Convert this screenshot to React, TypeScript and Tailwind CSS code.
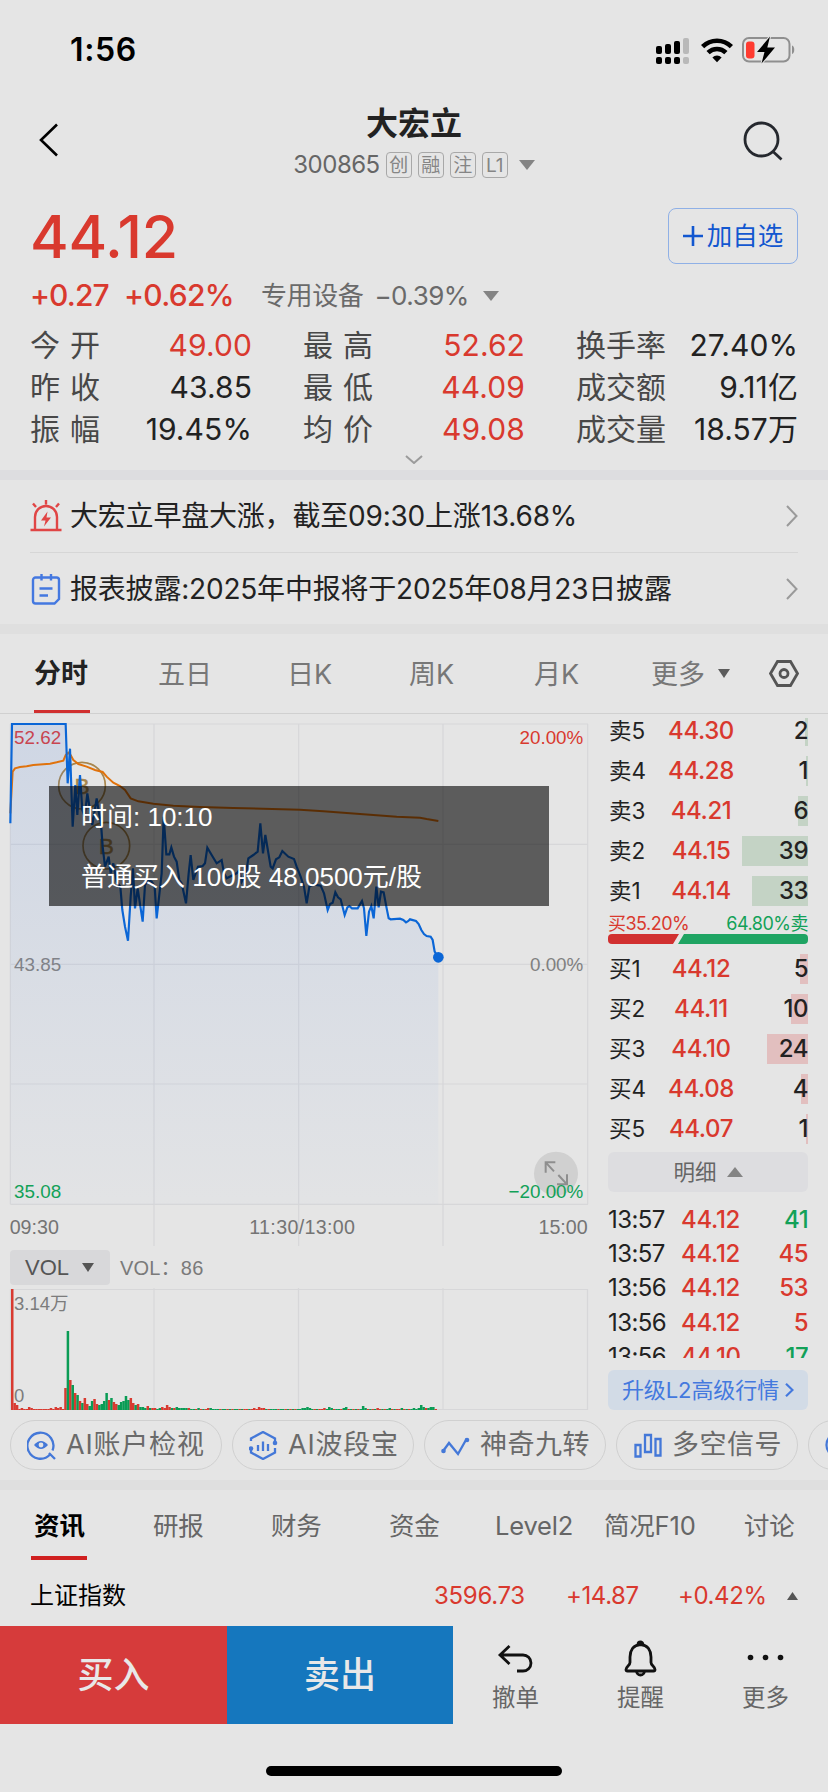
import React from 'react';
import clsx from 'clsx';

type Cell = { label: string; value: string; up?: boolean };

const stats: Cell[][] = [
  [
    { label: '今开', value: '49.00', up: true },
    { label: '昨收', value: '43.85' },
    { label: '振幅', value: '19.45%' },
  ],
  [
    { label: '最高', value: '52.62', up: true },
    { label: '最低', value: '44.09', up: true },
    { label: '均价', value: '49.08', up: true },
  ],
  [
    { label: '换手率', value: '27.40%' },
    { label: '成交额', value: '9.11亿' },
    { label: '成交量', value: '18.57万' },
  ],
];

const asks = [
  { label: '卖5', price: '44.30', qty: 2, width: 3 },
  { label: '卖4', price: '44.28', qty: 1, width: 2 },
  { label: '卖3', price: '44.21', qty: 6, width: 10 },
  { label: '卖2', price: '44.15', qty: 39, width: 66 },
  { label: '卖1', price: '44.14', qty: 33, width: 56 },
];

const bids = [
  { label: '买1', price: '44.12', qty: 5, width: 8 },
  { label: '买2', price: '44.11', qty: 10, width: 17 },
  { label: '买3', price: '44.10', qty: 24, width: 41 },
  { label: '买4', price: '44.08', qty: 4, width: 7 },
  { label: '买5', price: '44.07', qty: 1, width: 2 },
];

const ticks = [
  { time: '13:57', price: '44.12', qty: 41, sell: true },
  { time: '13:57', price: '44.12', qty: 45 },
  { time: '13:56', price: '44.12', qty: 53 },
  { time: '13:56', price: '44.12', qty: 5 },
  { time: '13:56', price: '44.10', qty: 17, sell: true },
];

const priceLine =
  '31,370 36,72 197,72 203,250 210,146 218,380 226,255 232,345 240,225 247,330 254,350 262,280 270,330 277,375 290,295 297,340 303,370 308,440 315,500 326,470 332,520 340,490 350,545 361,560 367,630 375,680 384,722 392,590 399,505 405,625 413,565 428,665 435,555 445,540 455,545 464,560 470,655 485,520 491,350 499,463 508,463 514,442 522,470 530,485 538,540 545,550 558,610 566,520 572,465 580,540 594,500 608,498 615,490 622,443 635,465 650,490 665,480 672,520 680,535 710,520 718,510 725,545 738,520 745,475 760,465 773,455 781,370 789,460 796,405 812,500 818,505 828,478 838,472 847,453 865,470 882,477 890,500 902,530 912,560 920,610 928,560 940,553 962,557 972,580 983,630 990,612 998,608 1006,577 1014,592 1022,598 1034,645 1042,622 1048,618 1056,625 1073,625 1086,603 1092,625 1099,708 1107,635 1114,618 1121,655 1129,560 1136,622 1143,575 1151,577 1160,625 1166,655 1172,658 1200,656 1210,660 1218,667 1225,663 1230,658 1248,663 1256,672 1264,690 1272,702 1280,708 1292,710 1298,720 1304,755 1315,772';

const avgLine =
  '31,340 38,215 45,205 60,201 80,199 100,195 150,191 170,187 190,182 197,165 205,158 212,165 220,180 235,192 260,200 285,210 308,216 320,230 340,248 360,258 375,270 392,295 415,304 460,311 520,317 600,321 700,324 900,329 970,334 1040,339 1120,345 1190,350 1260,353 1280,357 1315,363';

// one entry per minute: height in px, g = falling minute
const volumes = (
  '121 7 5 1 2 1 1 3 2 1 1 1 1 1 1 1 2 1 3 2 3 1 22 79g 30 25g 17 15g 9 7g 12 6 4g 9g 11 6 5g 6g 9g 17g 10 12g 8 6 5g 8g 9g 14g 10g 12 7 5g 6 3g 3g 2g 4 2g 2 2 1g 2g 3 2 5 3 2g 2 3g 2g 2g 2g 2g 2 1g 1g 1 2g 1 1g 1 2 2g 1g 1g 1g 1 1g 1g 1 1g 1 1g 1g 1 1g 1 1 1g 1 2 1 3 2 2 1g 1 1g 1g 1g 1 1g 1g 1 1g 1 1g 1 1g 1g 2g 2g 3g 2g 1g 1 1g 1 1 2 1g 3g 2g 1 1g 1g 1 2g 3g 1 1g 1 1g 1 1g 4g 2g 1 1g 1 1g 2 1 1g 1 1g 2g 1 1g 1 1 2g 1 1g 1 1g 2g 1g 2g 5g 3g 2 2g 3g 3g 1'
).split(' ');

const axisFont = { fontFamily: "'Liberation Sans','Noto Sans CJK SC',sans-serif" };

const Down = ({ className = '' }: { className?: string }) => (
  <svg viewBox="0 0 16 10" preserveAspectRatio="none" className={className} fill="currentColor">
    <path d="M0 0h16L8 10z" />
  </svg>
);

const ChevronRight = () => (
  <svg viewBox="0 0 12 22" className="h-[22px] w-3" fill="none" stroke="#9a9a9a" strokeWidth="2">
    <path d="M1 1l9.5 10L1 21" />
  </svg>
);

const StatusBar = () => (
  <div className="flex h-[100px] items-center justify-between pr-[32px] pl-[70px]">
    <span className="text-[32px] font-semibold tracking-[0.6px] text-black">1:56</span>
    <div className="flex items-center">
      <svg viewBox="0 0 34 28" className="h-7 w-[34px]">
        {[
          [0, 10],
          [9, 8],
          [18, 5],
          [27, 2],
        ].map(([x, y], i) => (
          <g key={x} fill={i === 3 ? '#b9b9b9' : '#000'}>
            <rect x={x} y={y} width="6" height={18 - y} rx="2" />
            <rect x={x} y="21" width="6" height="7" rx="2" />
          </g>
        ))}
      </svg>
      <svg viewBox="0 0 32 25" className="ml-[11px] h-[25px] w-8" fill="none" stroke="#000" strokeWidth="4.600">
        <path d="M1.6 8.6a20.5 20.5 0 0 1 28.8 0" />
        <path d="M7.1 14.6a12.8 12.8 0 0 1 17.8 0" />
        <path d="M11.4 19.4a6.6 6.6 0 0 1 9.2 0L16 24.3z" fill="#000" stroke="none" />
      </svg>
      <svg viewBox="0 0 54 28" className="ml-[9px] h-7 w-[54px]">
        <rect x="1" y="2" width="46.5" height="23.5" rx="6" fill="none" stroke="#8f8f8f" strokeWidth="2" />
        <path d="M50 9.500c3 1 3 7.500 0 8.500z" fill="#8f8f8f" />
        <rect x="4" y="5.500" width="8.500" height="17" rx="3" fill="#ff3b30" />
        <path d="M28 .5L15 16h7.500L19.500 27.500 33 11.500h-7.700z" fill="#000" stroke="#e5e5e5" strokeWidth="2" paintOrder="stroke" />
      </svg>
    </div>
  </div>
);

const Header = () => (
  <div className="flex h-[96px] justify-between pr-[45px] pl-[39px]">
    <svg viewBox="0 0 20 34" className="mt-[23px] h-[34px] w-5" fill="none" stroke="#000" strokeWidth="2.600">
      <path d="M18 1.500L2 17l16 15.500" />
    </svg>
    <div className="flex flex-col items-center pl-[26px]">
      <h1 className="mt-[4px] h-10 text-[32px] leading-10 font-bold text-[#222]">大宏立</h1>
      <div className="mt-[8px] flex h-[26px] items-center gap-[6px] text-[#666]">
        <span className="text-[24px] tracking-[-0.5px]">300865</span>
        {['创', '融', '注', 'L1'].map((tag) => (
          <span
            key={tag}
            className="flex size-[26px] items-center justify-center rounded-[4px] border border-[#a8a8a8] text-[19px] leading-none text-[#858585]"
          >
            {tag}
          </span>
        ))}
        <Down className="ml-[5px] h-[10px] w-4 text-[#848484]" />
      </div>
    </div>
    <svg viewBox="0 0 40 40" className="mt-[21px] size-10" fill="none" stroke="#25282e" strokeWidth="2.800">
      <circle cx="18.500" cy="18.500" r="16.500" />
      <path d="M30.500 31l8 7.500" />
    </svg>
  </div>
);

const Quote = () => (
  <section className="h-[274px] px-[30px]">
    <div className="flex h-[80px] items-center justify-between">
      <span className="text-[59px] leading-none font-medium tracking-[-0.2px] text-[#d9392e]">44.12</span>
      <button className="flex h-14 w-[130px] items-center justify-center gap-1 rounded-lg border border-[#8fb0e6] text-[25.500px] text-[#1257d0]">
        <svg viewBox="0 0 20 20" className="size-[20px]" stroke="currentColor" strokeWidth="2.600">
          <path d="M10 0v20M0 10h20" />
        </svg>
        加自选
      </button>
    </div>
    <div className="flex h-[39px] items-center text-[#d9392e]">
      <span className="w-[94px] text-[30px] font-medium tracking-[-0.9px]">+0.27</span>
      <span className="w-[137px] text-[30px] font-medium tracking-[-0.7px]">+0.62%</span>
      <span className="text-[26px] tracking-[-0.4px] text-[#6a6a6a]">专用设备</span>
      <span className="ml-[11px] text-[26px] tracking-[-0.5px] text-[#6a6a6a]">−0.39%</span>
      <Down className="ml-[14px] h-[10px] w-4 text-[#848484]" />
    </div>
    <div className="mt-[9px] flex justify-between text-[30px]">
      {stats.map((col, i) => (
        <div key={i} className="w-[222px]">
          {col.map((cell) => (
            <div key={cell.label} className="flex h-[42px] items-center justify-between">
              <span className={clsx('text-[#484848]', cell.label.length === 2 && 'tracking-[10px]')}>{cell.label}</span>
              <span className={clsx('tracking-[0.1px]', cell.up ? 'text-[#d9392e]' : 'text-[#222]')}>{cell.value}</span>
            </div>
          ))}
        </div>
      ))}
    </div>
    <svg viewBox="0 0 18 9" className="mx-auto mt-[5px] h-[9px] w-[18px]" fill="none" stroke="#9b9b9b" strokeWidth="2">
      <path d="M1 1l8 7 8-7" />
    </svg>
  </section>
);

const News = () => (
  <section className="h-[144px] px-[30px] text-[28px] text-[#222]">
    <div className="flex h-[73px] items-center border-b border-[#d6d6d6]">
      <svg viewBox="0 0 32 32" className="size-8 text-[#e04545]" fill="none" stroke="currentColor" strokeWidth="2.400">
        <path d="M5 29V17a11 11 0 0 1 22 0v12M0.500 30h31M16 0v4.500M3 3.500l3 3.500M29 3.500L26 7" />
        <path d="M17.500 11.500l-6.500 9h4.500l-1.500 6 7-9h-4.500z" fill="currentColor" stroke="none" />
      </svg>
      <span className="ml-[8px] flex-1 tracking-[-0.2px]">大宏立早盘大涨，截至09:30上涨13.68%</span>
      <ChevronRight />
    </div>
    <div className="flex h-[71px] items-center">
      <svg viewBox="0 0 30 32" className="ml-px h-8 w-[30px] text-[#4478e0]" fill="none" stroke="currentColor" strokeWidth="2.400">
        <path d="M4.500 4.500h21a2.500 2.500 0 0 1 2.500 2.500v19l-4.500 4.500h-19A2.500 2.500 0 0 1 2 28V7a2.500 2.500 0 0 1 2.500-2.500zM10.500 1v6.500M20 1v6.500M8.500 15.500h13M8.500 22.500H17" />
      </svg>
      <span className="ml-[9px] flex-1 tracking-[-0.2px]">报表披露:2025年中报将于2025年08月23日披露</span>
      <ChevronRight />
    </div>
  </section>
);

const periods = [
  { name: '五日', width: 'w-[129px]' },
  { name: '日K', width: 'w-[122px]' },
  { name: '周K', width: 'w-[125px]' },
  { name: '月K', width: 'w-[117px]' },
];

const PeriodTabs = () => (
  <nav className="flex h-20 items-center border-b border-[#d0d0d0] pl-[34px] text-[27px] text-[#777]">
    <div className="relative flex h-full w-[124px] items-center font-bold text-[#222]">
      <span className="pt-[2px]">分时</span>
      <span className="absolute bottom-0 left-0 h-[3px] w-14 bg-[#d13030]" />
    </div>
    {periods.map((p) => (
      <span key={p.name} className={clsx('pt-[3px]', p.width)}>
        {p.name}
      </span>
    ))}
    <span className="pt-[3px]">更多</span>
    <Down className="ml-[13px] h-[9px] w-3 text-[#5c5c5c]" />
    <svg viewBox="0 0 30 27" className="ml-[39px] h-[27px] w-[30px]" fill="none" stroke="#555" strokeWidth="2.800">
      <path d="M8.500 1.500h13l7 12-7 12h-13l-7-12z" />
      <circle cx="15" cy="13.500" r="4" />
    </svg>
  </nav>
);

/* three units per pixel */
const PriceChart = () => (
  <div className="relative h-[533px]">
    <svg viewBox="0 42 1800 1599" className="h-[533px] w-[600px]" fill="none">
      <defs>
        <linearGradient id="area" x1="0" y1="0" x2="0" y2="1">
          <stop offset="0" stopColor="#2a6be0" stopOpacity=".12" />
          <stop offset="1" stopColor="#2a6be0" stopOpacity=".015" />
        </linearGradient>
      </defs>
      <g stroke="#d7d7d9" strokeWidth="3.500">
        <path d="M31 72H1764M31 433H1764M31 793H1764M31 1152H1764M31 1513H1764" />
        <path d="M31 72V1513M1763 72V1513M462 72V1638M896 72V1638M1329 72V1638" />
      </g>
      <g stroke="#a8864d" strokeWidth="5">
        <circle cx="246" cy="257" r="70" />
        <circle cx="319" cy="437" r="70" />
      </g>
      <g fill="#a8864d" stroke="#a8864d" strokeWidth="1.500" fontSize="68" textAnchor="middle" style={axisFont}>
        <text x="246" y="282">B</text>
        <text x="319" y="462">B</text>
      </g>
      <polygon points={`${priceLine} 1315,1513 31,1513`} fill="url(#area)" />
      <polyline points={avgLine} stroke="#e0720c" strokeWidth="6" />
      <polyline points={priceLine} stroke="#0b66d6" strokeWidth="6.500" />
      <circle cx="1315" cy="772" r="16" fill="#0b66d6" />
      <circle cx="1668" cy="1421" r="66" fill="#d0d0d0" />
      <path d="M1637 1418V1387h29M1637 1387l25 27M1671 1453h30v-30M1701 1453l-26-28" stroke="#8e8e8e" strokeWidth="6" />
      <g fontSize="56.500" style={axisFont}>
        <text x="42" y="132" fill="#c84550">52.62</text>
        <text x="42" y="813" fill="#808288">43.85</text>
        <text x="42" y="1493" fill="#12a158">35.08</text>
        <g textAnchor="end">
          <text x="1750" y="132" fill="#d9392e">20.00%</text>
          <text x="1750" y="813" fill="#808080">0.00%</text>
          <text x="1750" y="1493" fill="#12a158">−20.00%</text>
        </g>
      </g>
      <g fontSize="59" fill="#747474" style={axisFont}>
        <text x="29" y="1602">09:30</text>
        <text x="907" y="1602" textAnchor="middle" letterSpacing="1">
          11:30/13:00
        </text>
        <text x="1763" y="1602" textAnchor="end">15:00</text>
      </g>
    </svg>
    <div className="absolute top-[72px] left-[49px] h-[120px] w-[500px] bg-black/60 pt-px pl-8 font-['Liberation_Sans','Noto_Sans_CJK_SC',sans-serif] text-[26px] leading-[60px] text-white">
      <p>时间: 10:10</p>
      <p>普通买入 100股 48.0500元/股</p>
    </div>
  </div>
);

const VolumeChart = () => (
  <div>
    <div className="mt-[3px] flex h-[35px] items-center pl-[10px] font-['Liberation_Sans','Noto_Sans_CJK_SC',sans-serif]">
      <span className="flex h-full w-[100px] items-center rounded-[4px] bg-[#d8d8da] pl-[15px] text-[22px] text-[#555]">
        VOL
        <Down className="ml-[13px] h-[9px] w-3 text-[#555]" />
      </span>
      <span className="ml-[10px] text-[20px] tracking-[0.2px] text-[#7a7a7a]">VOL：86</span>
    </div>
    <svg viewBox="0 0 600 125" className="h-[125px] w-[600px]">
      <path
        d="M10.500 4.500H588M10.500 124.500H588M10.500 4V125M587.500 4V125M154 3V125M298.500 3V125M443 3V125"
        stroke="#d7d7d9"
        strokeWidth="1.200"
        fill="none"
      />
      {volumes.map((v, i) => {
        const h = parseInt(v, 10);
        return (
          <rect
            key={i}
            x={11 + i * 2.42}
            y={125 - h}
            width="2.500"
            height={h}
            fill={v.endsWith('g') ? '#0a9c55' : '#d83a30'}
          />
        );
      })}
      <g fontSize="18.500" fill="#7c7c7c" style={axisFont}>
        <text x="14" y="25">3.14万</text>
        <text x="14" y="117">0</text>
      </g>
    </svg>
  </div>
);

const BookRow = ({ row, tone }: { row: (typeof asks)[number]; tone: string }) => (
  <div className="relative flex h-10 items-center justify-between text-[24px]">
    <span className={clsx('absolute right-0 h-[30px]', tone)} style={{ width: row.width }} />
    <span className="relative w-[60px] pl-[1px] text-[22.500px] text-[#222]">{row.label}</span>
    <span className="relative w-[66px] text-center font-medium tracking-[-0.4px] text-[#d9392e]">{row.price}</span>
    <span className="relative w-[74px] text-right font-medium tracking-[-0.5px] text-[#222]">{row.qty}</span>
  </div>
);

const OrderBook = () => (
  <aside className="ml-2 w-[200px]">
    <div className="mt-1 h-[197px] overflow-hidden">
      <div className="-mt-[7px]">
        {asks.map((row) => (
          <BookRow key={row.label} row={row} tone="bg-[#c4d3c5]" />
        ))}
      </div>
    </div>
    <div className="-mt-[2px] flex h-[20px] items-center justify-between text-[18px] tracking-[-0.5px]">
      <span className="text-[#d9392e]">买35.20%</span>
      <span className="text-[#12a158]">64.80%卖</span>
    </div>
    <svg viewBox="0 0 200 10" className="mt-[1px] h-[10px] w-[200px]">
      <path d="M4 0h67l-6 10H4a4 4 0 0 1-4-4V4a4 4 0 0 1 4-4z" fill="#d13030" />
      <path d="M76 0h120a4 4 0 0 1 4 4v2a4 4 0 0 1-4 4H70z" fill="#1fa463" />
    </svg>
    <div className="mt-[5px]">
      {bids.map((row) => (
        <BookRow key={row.label} row={row} tone="bg-[#e2bfbf]" />
      ))}
    </div>
    <div className="mt-[3px] flex h-10 items-center justify-center gap-[10px] rounded-md bg-[#dddde0] text-[21.500px] text-[#666]">
      明细
      <Down className="h-[10px] w-4 rotate-180 text-[#848484]" />
    </div>
    <div className="mt-[11px] h-[155px] overflow-hidden text-[24px]">
      {ticks.map((t, i) => (
        <div key={i} className="flex h-[34.200px] items-center tracking-[-0.6px]">
          <span className="w-[73px] text-[#222]">{t.time}</span>
          <span className="flex-1 font-medium tracking-[-0.3px] text-[#d9392e]">{t.price}</span>
          <span className={clsx('font-medium', t.sell ? 'text-[#12a158]' : 'text-[#d9392e]')}>{t.qty}</span>
        </div>
      ))}
    </div>
    <div className="mt-[12px] flex h-10 items-center justify-center gap-[6px] rounded-md bg-[#d2dbe6] text-[22px] tracking-[-0.1px] text-[#4479de]">
      升级L2高级行情
      <svg viewBox="0 0 9 14" className="h-[14px] w-[9px]" fill="none" stroke="currentColor" strokeWidth="2.200">
        <path d="M1 .8L7.500 7 1 13.200" />
      </svg>
    </div>
  </aside>
);

const tools = [
  {
    name: 'AI账户检视',
    width: 'w-[212px]',
    icon: (
      <>
        <path d="M23 23.500a13 13 0 1 1 2.500-4M22 22l6 6" />
        <path d="M7 14q7-8 14 0-7 8-14 0z" fill="currentColor" stroke="none" />
        <circle cx="14" cy="14" r="2.400" fill="#e5e5e5" stroke="none" />
      </>
    ),
  },
  {
    name: 'AI波段宝',
    width: 'w-[182px]',
    icon: (
      <>
        <path d="M2 10V7.500L14 1l12 6.500V12M2 18v3.500L14 28l12-6.500V17M9 14v6M14 10.500V20M19 13v7" />
        <circle cx="26" cy="12" r="2.300" fill="currentColor" stroke="none" />
        <circle cx="2" cy="17.500" r="2.300" fill="currentColor" stroke="none" />
      </>
    ),
  },
  {
    name: '神奇九转',
    width: 'w-[182px]',
    icon: (
      <>
        <path d="M2.500 19.500L8 12l9 11 8.500-15" />
        <circle cx="2.500" cy="20" r="2.300" fill="currentColor" stroke="none" />
        <circle cx="26" cy="9" r="2.300" fill="currentColor" stroke="none" />
      </>
    ),
  },
  {
    name: '多空信号',
    width: 'w-[182px]',
    icon: <path d="M2.500 14h5v11.500h-5zM12 4h6v17h-6zM22.500 8h5v16.500h-5z" />,
  },
  { name: '', width: 'w-[182px]', icon: <circle cx="14" cy="14" r="12.500" /> },
];

const Tools = () => (
  <div className="flex h-[70px] gap-[10px] overflow-hidden px-[10px] pt-[10px]">
    {tools.map((t) => (
      <div
        key={t.name}
        className={clsx('flex h-[50px] shrink-0 items-center gap-[10px] rounded-full border border-[#d0d0d0] pl-4', t.width)}
      >
        <svg viewBox="0 0 29 29" className="size-[29px] shrink-0 text-[#4478d8]" fill="none" stroke="currentColor" strokeWidth="2.300">
          {t.icon}
        </svg>
        <span
          className={clsx(
            'pt-px text-[27px] whitespace-nowrap text-[#6a6a6a]',
            t.name.startsWith('AI') ? 'tracking-[0.8px]' : 'tracking-[0.5px]',
          )}
        >
          {t.name}
        </span>
      </div>
    ))}
  </div>
);

const infoTabs = [
  { name: '研报', width: 'w-[118px]' },
  { name: '财务', width: 'w-[118px]' },
  { name: '资金', width: 'w-[106px]' },
  { name: 'Level2', width: 'w-[109px]' },
  { name: '简况F10', width: 'w-[140px]' },
  { name: '讨论', width: 'w-[60px]' },
];

const InfoTabs = () => (
  <nav className="flex h-[76px] items-start pt-[16px] pl-[34px] text-[25.500px] leading-10 text-[#666]">
    <div className="relative h-[54px] w-[119px] font-bold text-black">
      资讯
      <span className="absolute bottom-0 -left-[3px] h-1 w-14 bg-[#d02020]" />
    </div>
    {infoTabs.map((tab) => (
      <span key={tab.name} className={clsx('tracking-[-0.2px] whitespace-nowrap', tab.width)}>
        {tab.name}
      </span>
    ))}
  </nav>
);

const IndexRow = () => (
  <div className="flex h-[60px] items-center pr-[30px] pl-[30px] text-[24px]">
    <span className="flex-1 text-black">上证指数</span>
    <span className="w-[132px] tracking-[-0.3px] text-[#d9392e]">3596.73</span>
    <span className="w-[112px] tracking-[-0.4px] text-[#d9392e]">+14.87</span>
    <span className="w-[109px] tracking-[-0.4px] text-[#d9392e]">+0.42%</span>
    <Down className="h-[8px] w-[11px] rotate-180 text-[#555]" />
  </div>
);

const actions = [
  {
    name: '撤单',
    icon: <path d="M12.500 6L3 15l9.500 9M3.500 15H26a7.500 7.500 0 0 1 0 16h-6" />,
  },
  {
    name: '提醒',
    icon: (
      <path d="M18.500 4.500C11 5 8 11 8 17v5.500c0 3-4 4-4 7 0 1 .6 1.500 1.500 1.500h26c.9 0 1.500-.5 1.500-1.500 0-3-4-4-4-7V17c0-6-3-12-10.500-12.500zM16 4.500a2.500 2.500 0 0 1 5 0M14.500 31a4 4 0 0 0 8 0" />
    ),
  },
  {
    name: '更多',
    icon: (
      <g fill="currentColor" stroke="none">
        <circle cx="3.500" cy="17.500" r="2.800" />
        <circle cx="18.500" cy="17.500" r="2.800" />
        <circle cx="33.500" cy="17.500" r="2.800" />
      </g>
    ),
  },
];

const BottomBar = () => (
  <div className="flex h-[98px]">
    <button className="w-[227px] bg-[#d63b3b] text-[36px] font-medium text-[#e8e8e8]">买入</button>
    <button className="w-[226px] bg-[#1577be] text-[36px] font-medium text-[#e8e8e8]">卖出</button>
    <div className="flex flex-1">
      {actions.map((a) => (
        <div key={a.name} className="flex w-[125px] flex-col items-center pt-[14px]">
          <svg viewBox="0 0 37 37" className="size-[37px] text-[#111]" fill="none" stroke="currentColor" strokeWidth="2.800">
            {a.icon}
          </svg>
          <span className="mt-[7px] text-[23.500px] leading-[28px] text-[#666]">{a.name}</span>
        </div>
      ))}
    </div>
  </div>
);

const App: React.FC = () => {
  return (
    <div
      lang="zh-CN"
      className="h-[1792px] w-[828px] overflow-hidden bg-[#e5e5e5] font-['Inter','Noto_Sans_CJK_SC',sans-serif]"
    >
      <StatusBar />
      <Header />
      <Quote />
      <div className="h-[10px] bg-[#dddde0]" />
      <News />
      <div className="h-[10px] bg-[#dfdfdf]" />
      <PeriodTabs />
      <div className="flex h-[696px]">
        <div className="w-[600px]">
          <PriceChart />
          <VolumeChart />
        </div>
        <OrderBook />
      </div>
      <Tools />
      <div className="h-[10px] bg-[#dfdfdf]" />
      <InfoTabs />
      <IndexRow />
      <BottomBar />
      <div className="mx-auto mt-[42px] h-[10px] w-[296px] rounded-full bg-black" />
    </div>
  );
};

export default App;
